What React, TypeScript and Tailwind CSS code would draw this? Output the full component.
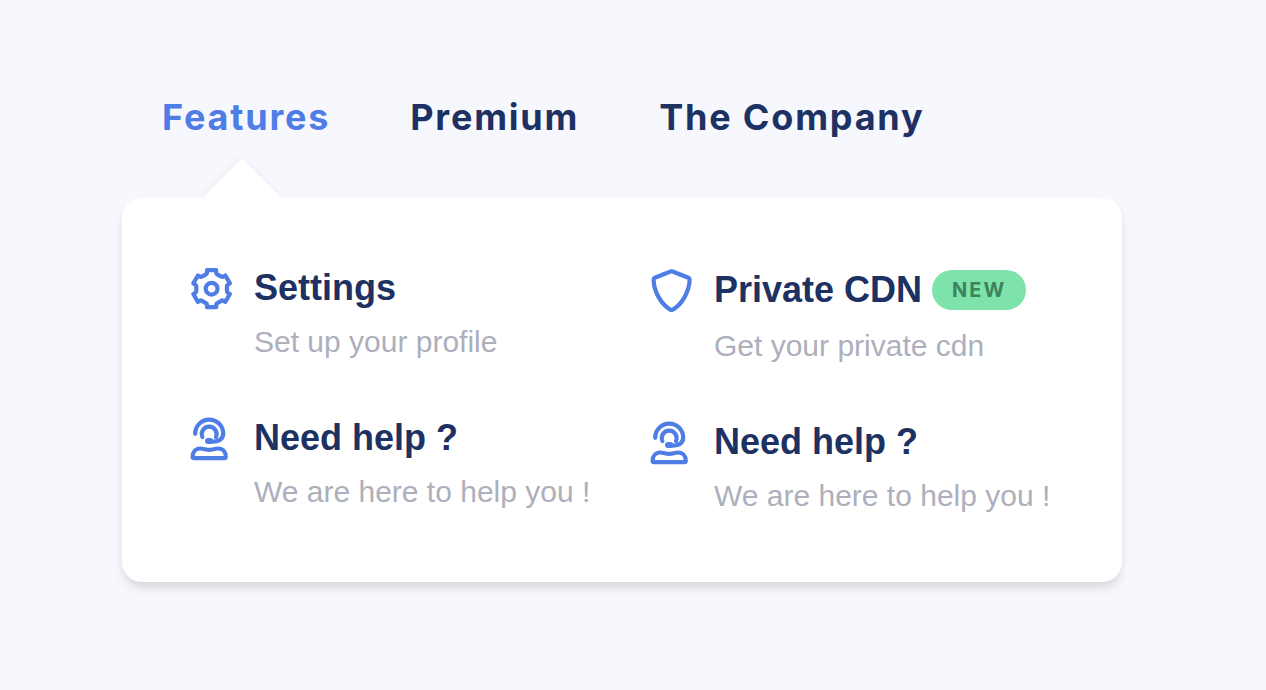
import { useState } from "react";
import type { ReactNode } from "react";

const tabs = ["Features", "Premium", "The Company"];

function SettingsIcon() {
  return (
    <svg
      viewBox="0 0 60 48"
      className="-mt-1 h-12 w-[60px] shrink-0"
      fill="none"
      stroke="currentColor"
      strokeWidth="4.2"
      strokeLinecap="round"
      strokeLinejoin="round"
      aria-hidden="true"
    >
      <g transform="translate(29.6 22.7)">
        <path d="M-4.6 -18.5H4.6V-16Q4.6 -14.8 5.6 -14.4L9.7 -12.1Q10.6 -11.5 11.5 -12L13.7 -13.2L18.3 -5.3L16.2 -4Q15.3 -3.4 15.3 -2.4V2.4Q15.3 3.4 16.2 4L18.3 5.3L13.7 13.2L11.5 12Q10.6 11.5 9.7 12.1L5.6 14.4Q4.6 14.8 4.6 16V18.5H-4.6V16Q-4.6 14.8 -5.6 14.4L-9.7 12.1Q-10.6 11.5 -11.5 12L-13.7 13.2L-18.3 5.3L-16.2 4Q-15.3 3.4 -15.3 2.4V-2.4Q-15.3 -3.4 -16.2 -4L-18.3 -5.3L-13.7 -13.2L-11.5 -12Q-10.6 -11.5 -9.7 -12.1L-5.6 -14.4Q-4.6 -14.8 -4.6 -16Z" />
        <circle r="5.9" />
      </g>
    </svg>
  );
}

function ShieldIcon() {
  return (
    <svg
      viewBox="0 0 60 48"
      className="-mt-1 h-12 w-[60px] shrink-0"
      fill="none"
      stroke="currentColor"
      strokeWidth="4.2"
      strokeLinecap="round"
      strokeLinejoin="round"
      aria-hidden="true"
    >
      <path d="M28.6 5.5Q29.6 5.1 30.6 5.5L46.4 11.7Q47.6 12.2 47.6 13.6C47.4 26 39.6 38.6 30.9 43.6Q29.6 44.2 28.3 43.6C19.6 38.6 11.8 26 11.6 13.6Q11.6 12.2 12.8 11.7Z" />
    </svg>
  );
}

function SupportIcon() {
  return (
    <svg
      viewBox="0 0 60 48"
      className="-mt-1 h-12 w-[60px] shrink-0"
      fill="none"
      stroke="currentColor"
      strokeWidth="4.2"
      strokeLinecap="round"
      strokeLinejoin="round"
      aria-hidden="true"
    >
      <path d="M13.2 17.8A14 14 0 1 1 41.2 17.4C41.2 22.8 37 25.6 30 25.6H27" />
      <path d="M20.4 21A7.4 7.4 0 1 1 34 21" />
      <path d="M26 25.1H28.2" strokeWidth="6" />
      <path d="M18.2 32.5C21.6 32.5 23.8 33.9 27.2 33.9C30.6 33.9 32.8 32.5 36.2 32.5C40.8 32.5 43.8 36.2 43.8 40.8Q43.8 42.1 42.5 42.1H11.9Q10.6 42.1 10.6 40.8C10.6 36.2 13.6 32.5 18.2 32.5Z" />
    </svg>
  );
}

type ItemProps = {
  icon: ReactNode;
  title: string;
  text: string;
  badge?: string;
};

function MenuItem({ icon, title, text, badge }: ItemProps) {
  return (
    <a href="#" className="flex items-start gap-3 text-[#4f7de6]">
      {icon}
      <div>
        <div className="flex items-center gap-[10px]">
          <h3 className="text-4xl leading-9 font-bold whitespace-nowrap text-[#1d3163]">
            {title}
          </h3>
          {badge && (
            <span className="rounded-full bg-[#7de3ab] px-5 font-[Inter,sans-serif] text-xl leading-10 font-bold tracking-widest text-[#3b845c]">
              {badge}
            </span>
          )}
        </div>
        <p className="mt-[18px] text-3xl leading-9 text-[#adafbc]">{text}</p>
      </div>
    </a>
  );
}

export default function App() {
  const [active, setActive] = useState("Features");

  return (
    <main className="min-h-screen bg-[#f7f8fe] px-[122px] py-24 font-['Liberation_Sans',sans-serif]">
      <nav className="flex gap-20 px-10">
        {tabs.map((tab) => (
          <button
            key={tab}
            type="button"
            onClick={() => setActive(tab)}
            className={`cursor-pointer font-[Inter,sans-serif] text-4xl leading-[42px] font-bold tracking-wider whitespace-nowrap ${
              active === tab ? "text-[#4f7de6]" : "text-[#1d3163]"
            }`}
          >
            {tab}
          </button>
        ))}
      </nav>

      <div className="relative isolate mt-[60px] max-w-[1000px]">
        {/* arrow */}
        <div className="absolute -top-7 left-[92px] -z-10 size-14 rotate-45 bg-white shadow-[0_0_12px_rgba(0,0,0,0.05)]" />

        <div className="grid grid-cols-2 gap-10 rounded-[20px] bg-white px-[60px] pt-[72px] pb-[68px] shadow-[0_8px_12px_-2px_rgba(0,0,0,0.1),0_4px_8px_-2px_rgba(0,0,0,0.06)]">
          <div className="flex flex-col gap-[60px]">
            <MenuItem icon={<SettingsIcon />} title="Settings" text="Set up your profile" />
            <MenuItem icon={<SupportIcon />} title="Need help ?" text="We are here to help you !" />
          </div>
          <div className="flex flex-col gap-[60px]">
            <MenuItem icon={<ShieldIcon />} title="Private CDN" text="Get your private cdn" badge="NEW" />
            <MenuItem icon={<SupportIcon />} title="Need help ?" text="We are here to help you !" />
          </div>
        </div>
      </div>
    </main>
  );
}
